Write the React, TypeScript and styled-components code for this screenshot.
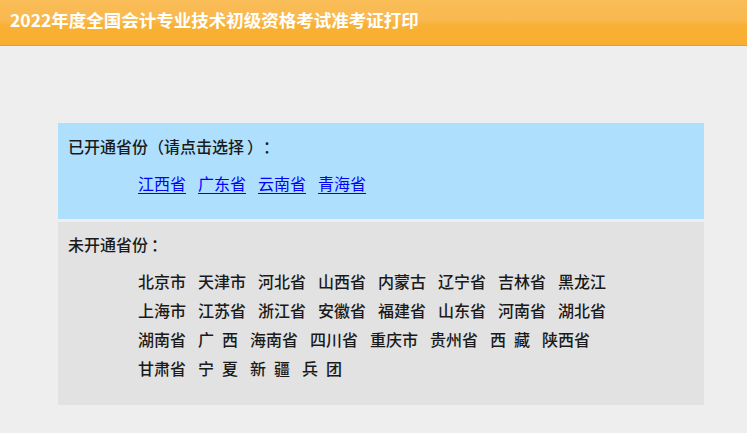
import React from "react";
import styled, { createGlobalStyle } from "styled-components";

const Global = createGlobalStyle`
  html, body { margin: 0; padding: 0; background: #eeeeee; }
  body { font-family: "Noto Sans CJK SC", "Liberation Sans", sans-serif; }
`;

const Header = styled.header`
  height: 45px;
  border-bottom: 1px solid #f09c16;
  background: linear-gradient(to bottom, #f9bc57 0%, #f9b94f 45%, #f8b135 55%, #f8af31 100%);
  display: flex;
  align-items: center;
  padding-left: 10px;
  box-sizing: content-box;
`;

const Title = styled.h1`
  margin: 0;
  margin-top: -6px;
  font-size: 17.5px;
  font-weight: bold;
  color: #ffffff;
  line-height: 22px;
`;

const Main = styled.main`
  padding: 77px 0 0 58px;
`;

const Box = styled.div`
  width: 646px;
  display: flex;
  flex-direction: column;
  gap: 3px;
`;

const Section = styled.section<{ $tone: "blue" | "gray"; $h: number }>`
  background: ${(p) => (p.$tone === "blue" ? "#aee0fd" : "#e2e2e2")};
  height: ${(p) => p.$h}px;
  box-sizing: border-box;
  padding: ${(p) => (p.$tone === "blue" ? "13px" : "12px")} 10px 0 10px;
`;

const Label = styled.div`
  font-size: 16px;
  line-height: 20px;
  font-weight: 500;
  color: #1a1a1a;
`;

const Punct = styled.span<{ $align: "left" | "right" }>`
  display: inline-block;
  width: 16px;
  text-align: ${(p) => p.$align};
  padding: ${(p) => (p.$align === "left" ? "0 0 0 3px" : "0 3px 0 0")};
  box-sizing: border-box;
`;

const List = styled.div<{ $top: number }>`
  padding-left: 70px;
  margin-top: ${(p) => p.$top}px;
  display: flex;
  flex-direction: column;
`;

const Row = styled.div<{ $lh: number }>`
  display: flex;
  gap: 12px;
  font-size: 16px;
  line-height: ${(p) => p.$lh}px;
  font-weight: 500;
  color: #1a1a1a;
`;

const Item = styled.span`
  white-space: pre;
`;

const Link = styled.a`
  white-space: nowrap;
  color: #0000ff;
  font-weight: 400;
  text-decoration: underline;
  text-underline-offset: 3px;
  cursor: pointer;
`;

const open = ["江西省", "广东省", "云南省", "青海省"];
const closed = [
  ["北京市", "天津市", "河北省", "山西省", "内蒙古", "辽宁省", "吉林省", "黑龙江"],
  ["上海市", "江苏省", "浙江省", "安徽省", "福建省", "山东省", "河南省", "湖北省"],
  ["湖南省", "广\u2002西", "海南省", "四川省", "重庆市", "贵州省", "西\u2002藏", "陕西省"],
  ["甘肃省", "宁\u2002夏", "新\u2002疆", "兵\u2002团"],
];

export default function App() {
  return (
    <div lang="zh-CN">
      <Global />
      <Header>
        <Title>2022年度全国会计专业技术初级资格考试准考证打印</Title>
      </Header>
      <Main>
        <Box>
          <Section $tone="blue" $h={96}>
            <Label>
              已开通省份<Punct $align="right">（</Punct>请点击选择
              <Punct $align="left">）</Punct>
              <Punct $align="left">：</Punct>
            </Label>
            <List $top={17}>
              <Row $lh={20}>
                {open.map((p) => (
                  <Link key={p}>{p}</Link>
                ))}
              </Row>
            </List>
          </Section>
          <Section $tone="gray" $h={183}>
            <Label>
              未开通省份<Punct $align="left">：</Punct>
            </Label>
            <List $top={13}>
              {closed.map((r, i) => (
                <Row $lh={29} key={i}>
                  {r.map((p) => (
                    <Item key={p}>{p}</Item>
                  ))}
                </Row>
              ))}
            </List>
          </Section>
        </Box>
      </Main>
    </div>
  );
}
